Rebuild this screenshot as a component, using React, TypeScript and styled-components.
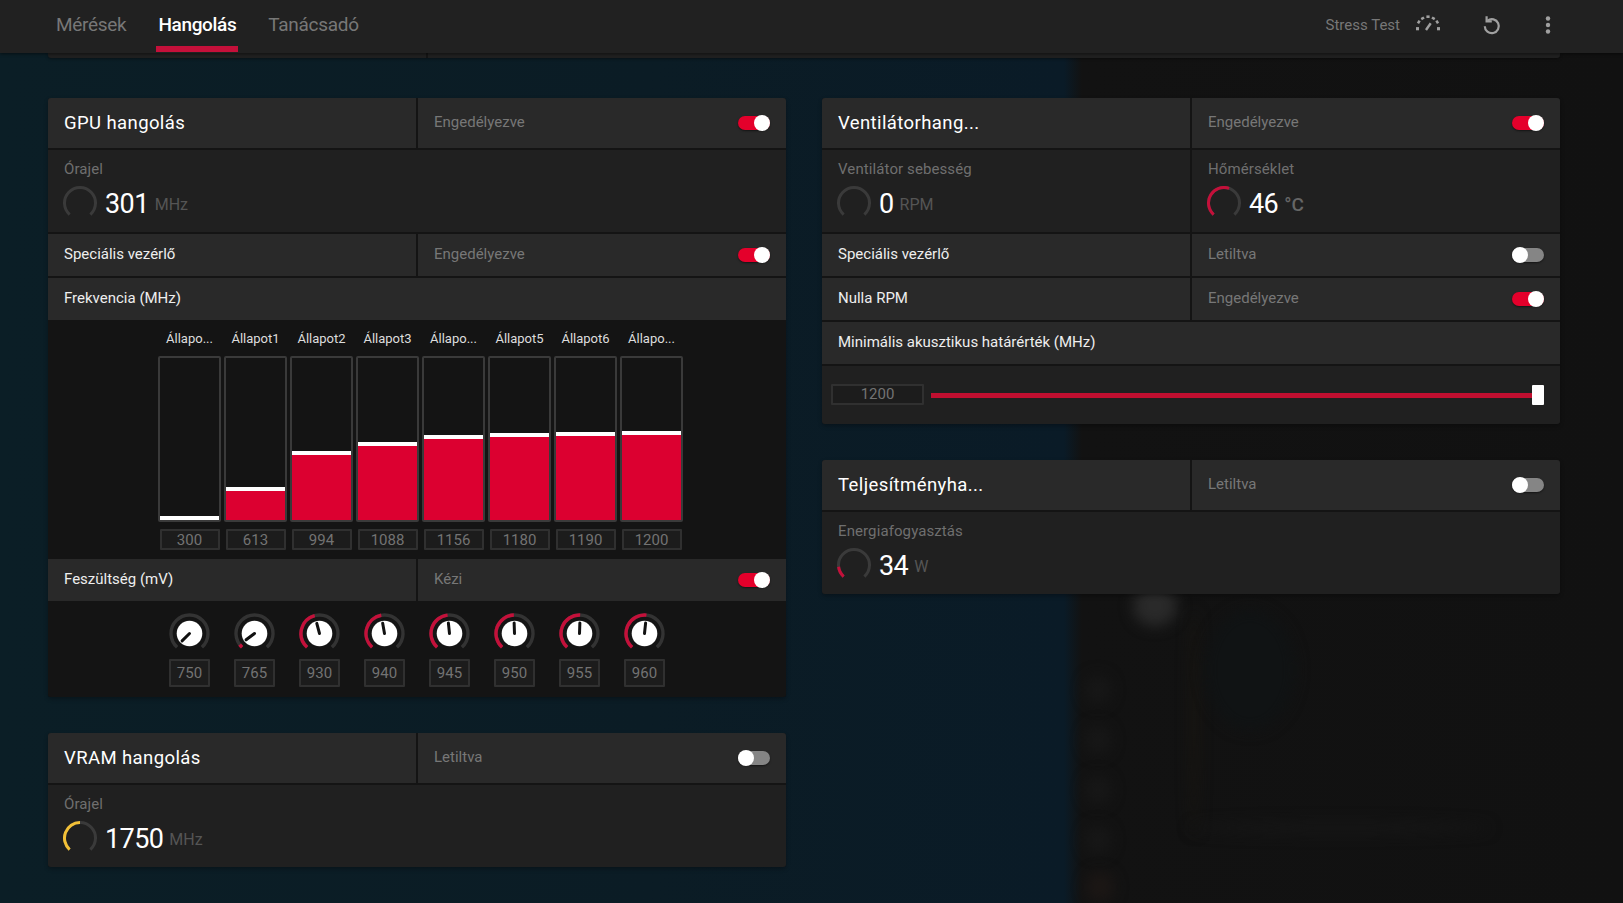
import styled, { createGlobalStyle } from "styled-components";

const GlobalStyle = createGlobalStyle`
  html, body {
    margin: 0;
    height: 100%;
    background: #0c1d26;
  }
  body {
    font-family: Roboto, "Noto Sans", "Liberation Sans", sans-serif;
    overflow: hidden;
  }
`;

const RED = "#dc0030";
const ARC_GREY = "#3a3a3a";

const Page = styled.div`
  position: relative;
  width: 100%;
  height: 100vh;
  overflow: hidden;
  background: linear-gradient(90deg, #0b1e26 0, #0b1c25 40%, #0a1b27 1064px, #121212 1082px, #111 100%);
`;

const Smudge = styled.div<{ $x: number; $y: number; $w: number; $h: number; $c: string }>`
  position: absolute;
  left: ${(p) => p.$x}px;
  top: ${(p) => p.$y}px;
  width: ${(p) => p.$w}px;
  height: ${(p) => p.$h}px;
  background: ${(p) => p.$c};
  border-radius: 50%;
  filter: blur(7px);
`;

const TopBar = styled.header`
  position: relative;
  z-index: 2;
  height: 53px;
  display: flex;
  align-items: flex-start;
  justify-content: space-between;
  padding: 0 63px 0 54px;
  background: #212121;
  box-shadow: 0 1px 3px rgba(0, 0, 0, 0.5);
`;

const Tabs = styled.nav`
  display: flex;
  gap: 28px;
`;

const Tab = styled.div<{ $active?: boolean }>`
  box-sizing: border-box;
  height: 52px;
  padding: 3px 2px 0;
  display: flex;
  align-items: center;
  font-size: 19px;
  letter-spacing: ${(p) => (p.$active ? "-0.35px" : "-0.3px")};
  font-weight: ${(p) => (p.$active ? 500 : 400)};
  color: ${(p) => (p.$active ? "#fff" : "#777")};
  border-bottom: 6px solid ${(p) => (p.$active ? "#c4103a" : "transparent")};
`;

const Tools = styled.div`
  height: 50px;
  display: flex;
  align-items: center;
`;

const StressLabel = styled.span`
  font-size: 15px;
  color: #777;
`;

const ToolIcon = styled.div<{ $gap: number }>`
  width: 24px;
  height: 24px;
  margin-left: ${(p) => p.$gap}px;
  color: #a0a0a0;
`;

const Strip = styled.div`
  position: relative;
  z-index: 1;
  height: 5px;
  margin: 0 63px 0 48px;
  background: #202020;
  border-radius: 0 0 3px 3px;
  box-shadow: 0 1px 3px rgba(0, 0, 0, 0.4);
  display: flex;
`;

const StripDivider = styled.div`
  width: 2px;
  margin-left: 378px;
  background: #151515;
`;

const Columns = styled.main`
  position: relative;
  z-index: 1;
  display: grid;
  grid-template-columns: 738px 738px;
  gap: 36px;
  padding: 40px 63px 0 48px;
`;

const Column = styled.div`
  display: flex;
  flex-direction: column;
  gap: 36px;
`;

const Card = styled.section`
  display: flex;
  flex-direction: column;
  gap: 2px;
  background: #141414;
  border-radius: 3px;
  overflow: hidden;
  box-shadow: 0 2px 4px rgba(0, 0, 0, 0.3);
`;

const Split = styled.div`
  display: grid;
  grid-template-columns: 368px 368px;
  gap: 2px;
`;

const Cell = styled.div<{ $tall?: boolean }>`
  box-sizing: border-box;
  height: ${(p) => (p.$tall ? 50 : 42)}px;
  padding: 0 16px;
  display: flex;
  align-items: center;
  justify-content: space-between;
  background: #292929;
`;

const Title = styled.h2`
  margin: 0 0 1px;
  font-size: 18.5px;
  font-weight: 400;
  letter-spacing: 0.4px;
  color: #fff;
`;

const RowLabel = styled.span`
  margin-bottom: 2px;
  font-size: 15px;
  color: #eee;
`;

const Status = styled.span`
  margin-bottom: 2px;
  font-size: 15px;
  color: #777;
`;

const Track = styled.div<{ $on: boolean }>`
  width: 32px;
  height: 14px;
  display: flex;
  align-items: center;
  justify-content: ${(p) => (p.$on ? "flex-end" : "flex-start")};
  border-radius: 7px;
  background: ${(p) => (p.$on ? "#e4002b" : "#858585")};
  box-shadow: 0 1px 2px rgba(0, 0, 0, 0.5);
`;

const Knob = styled.div`
  width: 16px;
  height: 16px;
  flex: none;
  border-radius: 50%;
  background: #fff;
`;

const Metrics = styled.div`
  box-sizing: border-box;
  height: 82px;
  padding: 10px 16px 0;
  background: #202020;
`;

const MetricLabel = styled.div`
  font-size: 15px;
  line-height: 18px;
  letter-spacing: 0.1px;
  color: #6f6f6f;
`;

const Reading = styled.div`
  margin: 8px 0 0 -1px;
  display: flex;
  align-items: center;
  height: 34px;
`;

const ReadingValue = styled.span`
  margin: 2px 0 0 8px;
  font-size: 27px;
  letter-spacing: -0.6px;
  color: #fff;
`;

const ReadingUnit = styled.span<{ $strong?: boolean }>`
  margin: 2px 0 0 6px;
  font-size: ${(p) => (p.$strong ? 19 : 16)}px;
  font-weight: ${(p) => (p.$strong ? 500 : 400)};
  color: ${(p) => (p.$strong ? "#666" : "#555")};
`;

const MetricSplit = styled(Split)`
  background: #141414;
`;

const ChartArea = styled.div`
  box-sizing: border-box;
  height: 237px;
  margin-top: -2px;
  padding: 10px 0 0 110px;
  display: flex;
  gap: 3px;
  background: #141414;
`;

const BarColumn = styled.div`
  width: 63px;
  display: flex;
  flex-direction: column;
  align-items: center;
`;

const BarLabel = styled.div`
  height: 18px;
  margin-bottom: 8px;
  font-size: 13px;
  line-height: 18px;
  color: #ddd;
  white-space: nowrap;
`;

const BarTrack = styled.div`
  box-sizing: border-box;
  width: 63px;
  height: 166px;
  display: flex;
  flex-direction: column;
  justify-content: flex-end;
  border: 2px solid #3a3a3a;
  border-radius: 2px;
  background: #141414;
`;

const BarFill = styled.div<{ $h: number }>`
  box-sizing: border-box;
  height: ${(p) => p.$h}px;
  border-top: 4px solid #fff;
  background: ${RED};
`;

const ValueBox = styled.div<{ $w: number; $h: number }>`
  box-sizing: border-box;
  width: ${(p) => p.$w}px;
  height: ${(p) => p.$h}px;
  flex: none;
  display: flex;
  align-items: center;
  justify-content: center;
  border: 2px solid #303030;
  border-radius: 1px;
  background: #1c1c1c;
  font-size: 15px;
  color: #737373;
`;

const BarBox = styled(ValueBox)`
  margin-top: 7px;
`;

const KnobArea = styled.div`
  box-sizing: border-box;
  height: 96px;
  padding: 12px 0 0 121px;
  display: flex;
  gap: 24px;
  background: #141414;
  margin-top: -2px;
`;

const KnobColumn = styled.div`
  width: 41px;
  display: flex;
  flex-direction: column;
  align-items: center;
`;

const KnobBox = styled(ValueBox)`
  margin-top: 5px;
`;

const SliderRow = styled.div`
  box-sizing: border-box;
  height: 58px;
  padding: 0 16px 0 9px;
  display: flex;
  align-items: center;
  background: #202020;
`;

const SliderBox = styled(ValueBox)`
  margin-bottom: 2px;
`;

const SliderTrack = styled.div`
  flex: 1;
  height: 5px;
  margin-left: 7px;
  background: #c00f30;
`;

const SliderThumb = styled.div`
  width: 12px;
  height: 20px;
  background: #fff;
  border-radius: 1px;
`;

const polar = (cx: number, cy: number, r: number, deg: number) => {
  const a = (deg * Math.PI) / 180;
  return [cx + r * Math.sin(a), cy - r * Math.cos(a)];
};

const arcPath = (cx: number, cy: number, r: number, from: number, to: number) => {
  const [x1, y1] = polar(cx, cy, r, from);
  const [x2, y2] = polar(cx, cy, r, to);
  const large = to - from > 180 ? 1 : 0;
  return `M${x1} ${y1}A${r} ${r} 0 ${large} 1 ${x2} ${y2}`;
};

const START = -138;
const END = 138;

const Gauge = ({ fill, color = "#c4103a" }: { fill: number; color?: string }) => (
  <svg width="34" height="34" viewBox="0 0 34 34" fill="none" strokeWidth="3">
    <path d={arcPath(17, 17, 15.5, START, END)} stroke={ARC_GREY} />
    {fill > 0 && <path d={arcPath(17, 17, 15.5, START, START + (END - START) * fill)} stroke={color} />}
  </svg>
);

const Dial = ({ angle }: { angle: number }) => {
  const [px, py] = polar(20.5, 20.5, 10.5, angle);
  return (
    <svg width="41" height="41" viewBox="0 0 41 41" fill="none">
      <path d={arcPath(20.5, 20.5, 18.5, START, END)} stroke="#333" strokeWidth="3.4" />
      {angle > -135 && <path d={arcPath(20.5, 20.5, 18.5, START, angle)} stroke="#c4103a" strokeWidth="3.4" />}
      <circle cx="20.5" cy="20.5" r="12.8" fill="#fff" />
      <path d={`M20.5 20.5L${px} ${py}`} stroke="#111" strokeWidth="3" strokeLinecap="round" />
    </svg>
  );
};

const Toggle = ({ on }: { on: boolean }) => (
  <Track $on={on}>
    <Knob />
  </Track>
);

const Metric = ({
  label,
  value,
  unit,
  fill,
  color,
  strong,
}: {
  label: string;
  value: string;
  unit: string;
  fill: number;
  color?: string;
  strong?: boolean;
}) => (
  <Metrics>
    <MetricLabel>{label}</MetricLabel>
    <Reading>
      <Gauge fill={fill} color={color} />
      <ReadingValue>{value}</ReadingValue>
      <ReadingUnit $strong={strong}>{unit}</ReadingUnit>
    </Reading>
  </Metrics>
);

const ToggleRow = ({
  label,
  status,
  on,
  tall,
}: {
  label: string;
  status: string;
  on: boolean;
  tall?: boolean;
}) => (
  <Split>
    <Cell $tall={tall}>{tall ? <Title>{label}</Title> : <RowLabel>{label}</RowLabel>}</Cell>
    <Cell $tall={tall}>
      <Status>{status}</Status>
      <Toggle on={on} />
    </Cell>
  </Split>
);

const StressIcon = () => (
  <svg width="24" height="24" viewBox="0 0 24 24" fill="none" stroke="currentColor" strokeWidth="3.2">
    <path d="M0 15.7h3" />
    <path d="M1.7 8.3l2.2 1.3" />
    <path d="M6 4.2l1.3 2.2" />
    <path d="M12 2.4v2.6" />
    <path d="M18 4.2l-1.3 2.2" />
    <path d="M22.3 8.3l-2.2 1.3" />
    <path d="M21 15.7h3" />
    <path d="M10 17l4.7-6.7" strokeWidth="2.4" />
  </svg>
);

const ResetIcon = () => (
  <svg width="24" height="24" viewBox="0 0 24 24" fill="none" stroke="currentColor" strokeWidth="2.2">
    <path d="M8.6 7.6a7 7 0 1 1-2.8 5.6" />
    <path d="M7.6 3.2v5.2h5.2" />
  </svg>
);

const DotsIcon = () => (
  <svg width="24" height="24" viewBox="0 0 24 24" fill="currentColor">
    <circle cx="12" cy="5.5" r="2.2" />
    <circle cx="12" cy="12" r="2.2" />
    <circle cx="12" cy="18.5" r="2.2" />
  </svg>
);

const bars = [
  { label: "Állapo...", value: "300", h: 4 },
  { label: "Állapot1", value: "613", h: 33 },
  { label: "Állapot2", value: "994", h: 69 },
  { label: "Állapot3", value: "1088", h: 78 },
  { label: "Állapo...", value: "1156", h: 85 },
  { label: "Állapot5", value: "1180", h: 87 },
  { label: "Állapot6", value: "1190", h: 88 },
  { label: "Állapo...", value: "1200", h: 89 },
];

const knobs = [
  { value: "750", angle: -135 },
  { value: "765", angle: -127 },
  { value: "930", angle: -15 },
  { value: "940", angle: -10 },
  { value: "945", angle: -6 },
  { value: "950", angle: -2 },
  { value: "955", angle: 2 },
  { value: "960", angle: 6 },
];

const smudges = [
  { x: 1133, y: 586, w: 44, h: 40, c: "#2a2a2a" },
  { x: 1085, y: 675, w: 26, h: 30, c: "#171717" },
  { x: 1085, y: 725, w: 26, h: 30, c: "#171717" },
  { x: 1085, y: 775, w: 26, h: 30, c: "#171717" },
  { x: 1085, y: 825, w: 26, h: 30, c: "#171717" },
  { x: 1086, y: 872, w: 28, h: 30, c: "#1c1715" },
  { x: 1190, y: 610, w: 8, h: 225, c: "#191611" },
  { x: 1205, y: 610, w: 90, h: 120, c: "#101314" },
  { x: 1190, y: 822, w: 300, h: 12, c: "#161616" },
];

export default function App() {
  return (
    <Page>
      <GlobalStyle />
      {smudges.map((s, i) => (
        <Smudge key={i} $x={s.x} $y={s.y} $w={s.w} $h={s.h} $c={s.c} />
      ))}
      <TopBar>
        <Tabs>
          <Tab>Mérések</Tab>
          <Tab $active>Hangolás</Tab>
          <Tab>Tanácsadó</Tab>
        </Tabs>
        <Tools>
          <StressLabel>Stress Test</StressLabel>
          <ToolIcon $gap={16}>
            <StressIcon />
          </ToolIcon>
          <ToolIcon $gap={39}>
            <ResetIcon />
          </ToolIcon>
          <ToolIcon $gap={33}>
            <DotsIcon />
          </ToolIcon>
        </Tools>
      </TopBar>
      <Strip>
        <StripDivider />
      </Strip>
      <Columns>
        <Column>
          <Card>
            <ToggleRow label="GPU hangolás" status="Engedélyezve" on tall />
            <Metric label="Órajel" value="301" unit="MHz" fill={0} />
            <ToggleRow label="Speciális vezérlő" status="Engedélyezve" on />
            <Cell>
              <RowLabel>Frekvencia (MHz)</RowLabel>
            </Cell>
            <ChartArea>
              {bars.map((b) => (
                <BarColumn key={b.value}>
                  <BarLabel>{b.label}</BarLabel>
                  <BarTrack>
                    <BarFill $h={b.h} />
                  </BarTrack>
                  <BarBox $w={60} $h={21}>
                    {b.value}
                  </BarBox>
                </BarColumn>
              ))}
            </ChartArea>
            <ToggleRow label="Feszültség (mV)" status="Kézi" on />
            <KnobArea>
              {knobs.map((k) => (
                <KnobColumn key={k.value}>
                  <Dial angle={k.angle} />
                  <KnobBox $w={41} $h={28}>
                    {k.value}
                  </KnobBox>
                </KnobColumn>
              ))}
            </KnobArea>
          </Card>
          <Card>
            <ToggleRow label="VRAM hangolás" status="Letiltva" on={false} tall />
            <Metric label="Órajel" value="1750" unit="MHz" fill={0.5} color="#f2c037" />
          </Card>
        </Column>
        <Column>
          <Card>
            <ToggleRow label="Ventilátorhang..." status="Engedélyezve" on tall />
            <MetricSplit>
              <Metric label="Ventilátor sebesség" value="0" unit="RPM" fill={0} />
              <Metric label="Hőmérséklet" value="46" unit="°C" fill={0.57} strong />
            </MetricSplit>
            <ToggleRow label="Speciális vezérlő" status="Letiltva" on={false} />
            <ToggleRow label="Nulla RPM" status="Engedélyezve" on />
            <Cell>
              <RowLabel>Minimális akusztikus határérték (MHz)</RowLabel>
            </Cell>
            <SliderRow>
              <SliderBox $w={93} $h={21}>
                1200
              </SliderBox>
              <SliderTrack />
              <SliderThumb />
            </SliderRow>
          </Card>
          <Card>
            <ToggleRow label="Teljesítményha..." status="Letiltva" on={false} tall />
            <Metric label="Energiafogyasztás" value="34" unit="W" fill={0.15} />
          </Card>
        </Column>
      </Columns>
    </Page>
  );
}
